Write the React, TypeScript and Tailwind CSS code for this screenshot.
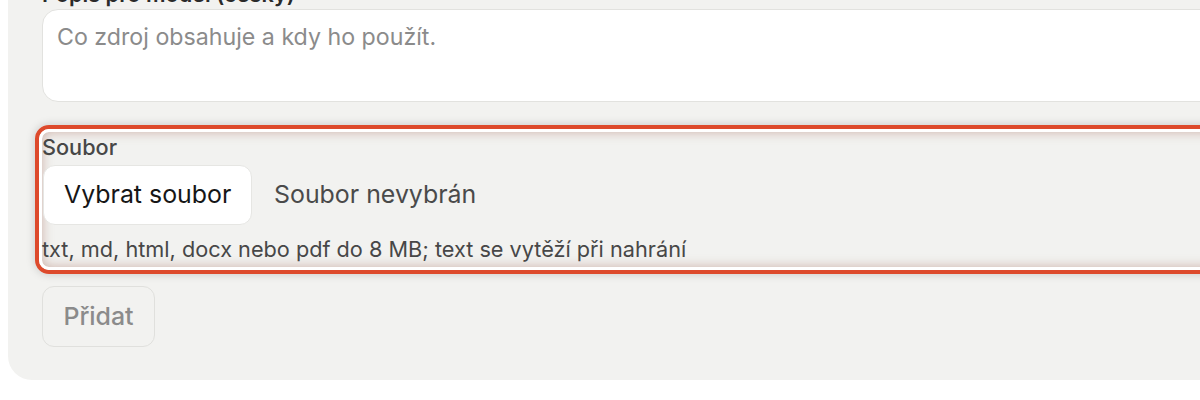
import React from "react";

export default function App() {
  return (
    <div
      className="w-[1200px] h-[400px] overflow-hidden bg-white"
      style={{ fontFamily: "Inter, 'Noto Sans', sans-serif" }}
    >
      <div className="ml-2 -mt-[20px] w-[1300px] rounded-bl-[24px] bg-[#f2f2f0] pl-[34px] pb-[33px] flex flex-col">
        <label className="text-[21.7px] leading-[28px] font-semibold text-[#2a2a2a] mb-[1px]">
          Popis pro model (česky)
        </label>
        <div className="h-[93px] rounded-[16px] border border-[#e2e2df] bg-white px-[14px] pt-[11px] text-[23.2px] leading-[32px] text-[#8b8b8b]">
          Co zdroj obsahuje a kdy ho použít.
        </div>

        <div className="mt-[23px] -ml-[7px] rounded-[14px] border-[4px] border-[#dd4a2c] shadow-[0_0_10px_rgba(0,0,0,0.18)]">
          <div className="rounded-[10px] border-[3px] border-white shadow-[inset_0_0_12px_rgba(150,80,60,0.4)] pt-[1px] pb-[4px] flex flex-col">
            <div className="text-[21.7px] leading-[28px] font-medium text-[#474747]">Soubor</div>
            <div className="mt-[4px] flex items-center gap-[22px]">
              <button className="h-[60px] w-[209px] ml-[1px] rounded-[12px] border border-[#e6e6e3] bg-white text-[24.9px] text-[#161616] text-left pl-[20px]">
                Vybrat soubor
              </button>
              <span className="text-[24.9px] text-[#4a4a4a]">Soubor nevybrán</span>
            </div>
            <div className="mt-[10px] text-[21.7px] leading-[28px] text-[#474747]">
              txt, md, html, docx nebo pdf do 8 MB; text se vytěží při nahrání
            </div>
          </div>
        </div>

        <button className="mt-[12px] h-[61px] w-[113px] rounded-[12px] border border-[#e0e0dd] bg-[#f2f2f0] text-[24.9px] font-medium text-[#8b8b8b]">
          Přidat
        </button>
      </div>
    </div>
  );
}
